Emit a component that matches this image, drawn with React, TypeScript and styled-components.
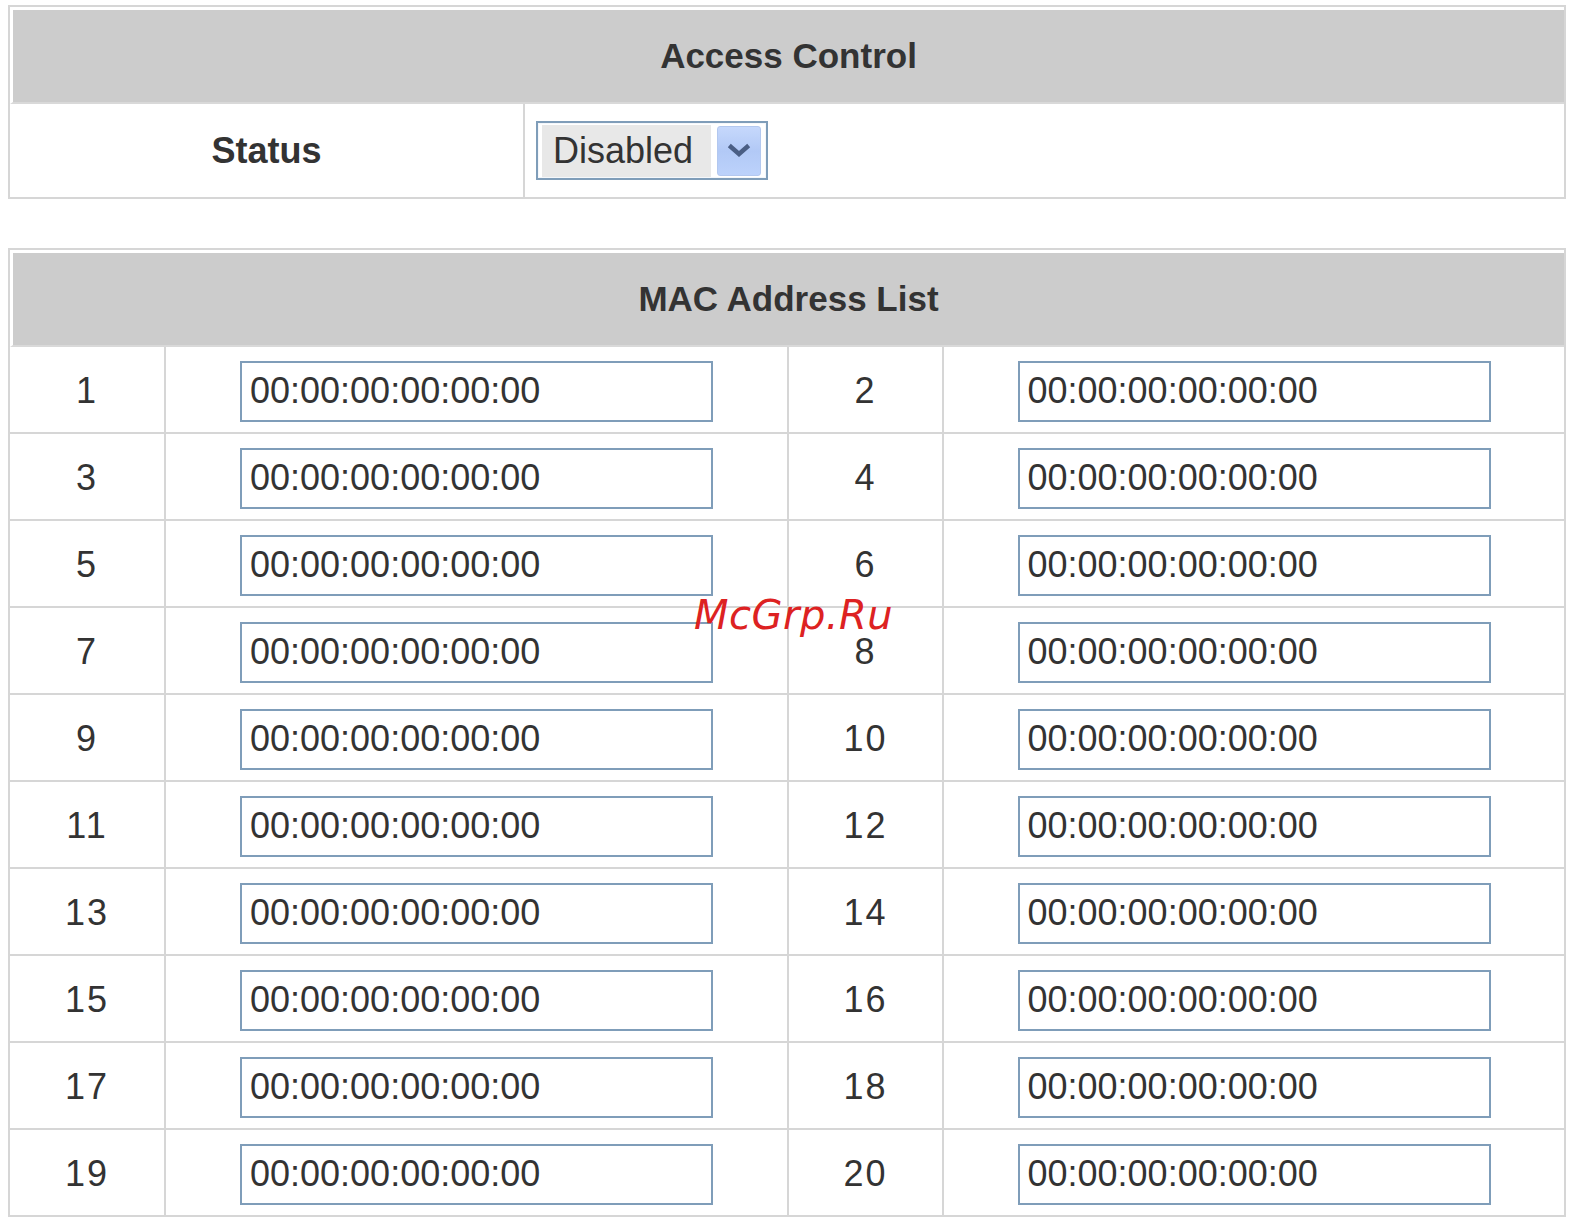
import React from "react";
import styled, { createGlobalStyle } from "styled-components";

const GlobalStyle = createGlobalStyle`
  html, body {
    margin: 0;
    padding: 0;
    background: #ffffff;
  }
  body {
    font-family: "Liberation Sans", Arial, sans-serif;
    color: #333333;
  }
`;

const Page = styled.div`
  position: relative;
  padding: 5px 8px 10px 8px;
  display: flex;
  flex-direction: column;
  gap: 49px;
`;

const Panel = styled.section`
  width: 1558px;
  box-sizing: border-box;
  border: 2px solid #d6d6d6;
  background: #ffffff;
`;

const PanelHeader = styled.div`
  height: 92px;
  border-top: 3px solid #ffffff;
  border-left: 3px solid #ffffff;
  background: #cccccc;
  display: flex;
  align-items: center;
  justify-content: center;
  font-size: 35px;
  font-weight: bold;
  color: #333333;
  border-bottom: 2px solid #d9d9d9;
`;

const StatusRow = styled.div`
  display: grid;
  grid-template-columns: 513px 1039px;
  column-gap: 2px;
  background: #d6d6d6;
  height: 93px;
`;

const LabelCell = styled.div`
  background: #ffffff;
  display: flex;
  align-items: center;
  justify-content: center;
  font-size: 36px;
  font-weight: bold;
  color: #333333;
`;

const ValueCell = styled.div`
  background: #ffffff;
  display: flex;
  align-items: center;
  padding-left: 11px;
`;

const SelectBox = styled.div`
  display: inline-flex;
  align-items: center;
  gap: 6px;
  border: 2px solid #7f9db9;
  box-shadow: inset 0 0 0 1px #f4f7fb;
  padding: 3px 5px 3px 4px;
  height: 59px;
  box-sizing: border-box;
  background: #ffffff;
`;

const SelectValue = styled.div`
  width: 169px;
  height: 52px;
  box-sizing: border-box;
  background: #e8e8e8;
  display: flex;
  align-items: center;
  padding-left: 11px;
  font-size: 36px;
  color: #333333;
`;

const SelectButton = styled.div`
  width: 44px;
  height: 50px;
  box-sizing: border-box;
  border-radius: 3px;
  border: 1px solid #b3c8ef;
  background: linear-gradient(to bottom, #c6d8fc 0%, #b2c9f6 50%, #bcd2fb 100%);
  display: flex;
  align-items: center;
  justify-content: center;
`;

const MacGrid = styled.div`
  display: grid;
  grid-template-columns: 154px 621px 153px 620px;
  grid-auto-rows: 85px;
  gap: 2px;
  background: #d6d6d6;
`;

const NumCell = styled.div`
  background: #ffffff;
  display: flex;
  align-items: center;
  justify-content: center;
  font-size: 36px;
  letter-spacing: 2px;
  color: #333333;
  padding-top: 2px;
`;

const InputCell = styled.div`
  background: #ffffff;
  display: flex;
  align-items: center;
  justify-content: center;
  padding-top: 3px;
`;

const MacInput = styled.input`
  width: 473px;
  height: 61px;
  box-sizing: border-box;
  border: 2px solid #7f9db9;
  padding: 0 0 0 8px;
  margin: 0;
  font-family: "Liberation Sans", Arial, sans-serif;
  font-size: 36px;
  color: #333333;
  background: #ffffff;
  outline: none;
`;

const Watermark = styled.div`
  position: absolute;
  left: 694px;
  top: 595px;
  font-family: "DejaVu Sans", sans-serif;
  font-style: italic;
  font-size: 40px;
  letter-spacing: 0.5px;
  line-height: 40px;
  color: #dd2222;
  pointer-events: none;
  white-space: nowrap;
`;

const Chevron = () => (
  <svg width="24" height="16" viewBox="0 0 24 16">
    <path
      d="M4 4 L12 11 L20 4"
      fill="none"
      stroke="#4a5e84"
      strokeWidth="4.5"
      strokeLinecap="square"
      strokeLinejoin="miter"
    />
  </svg>
);

const macRows = Array.from({ length: 10 }, (_, i) => [i * 2 + 1, i * 2 + 2]);

export default function App() {
  return (
    <>
      <GlobalStyle />
      <Page>
        <Panel>
          <PanelHeader>Access Control</PanelHeader>
          <StatusRow>
            <LabelCell>Status</LabelCell>
            <ValueCell>
              <SelectBox role="combobox" aria-label="Status">
                <SelectValue>Disabled</SelectValue>
                <SelectButton>
                  <Chevron />
                </SelectButton>
              </SelectBox>
            </ValueCell>
          </StatusRow>
        </Panel>

        <Panel>
          <PanelHeader>MAC Address List</PanelHeader>
          <MacGrid>
            {macRows.map(([a, b]) => (
              <React.Fragment key={a}>
                <NumCell>{a}</NumCell>
                <InputCell>
                  <MacInput defaultValue="00:00:00:00:00:00" />
                </InputCell>
                <NumCell>{b}</NumCell>
                <InputCell>
                  <MacInput defaultValue="00:00:00:00:00:00" />
                </InputCell>
              </React.Fragment>
            ))}
          </MacGrid>
        </Panel>
        <Watermark>McGrp.Ru</Watermark>
      </Page>
    </>
  );
}
